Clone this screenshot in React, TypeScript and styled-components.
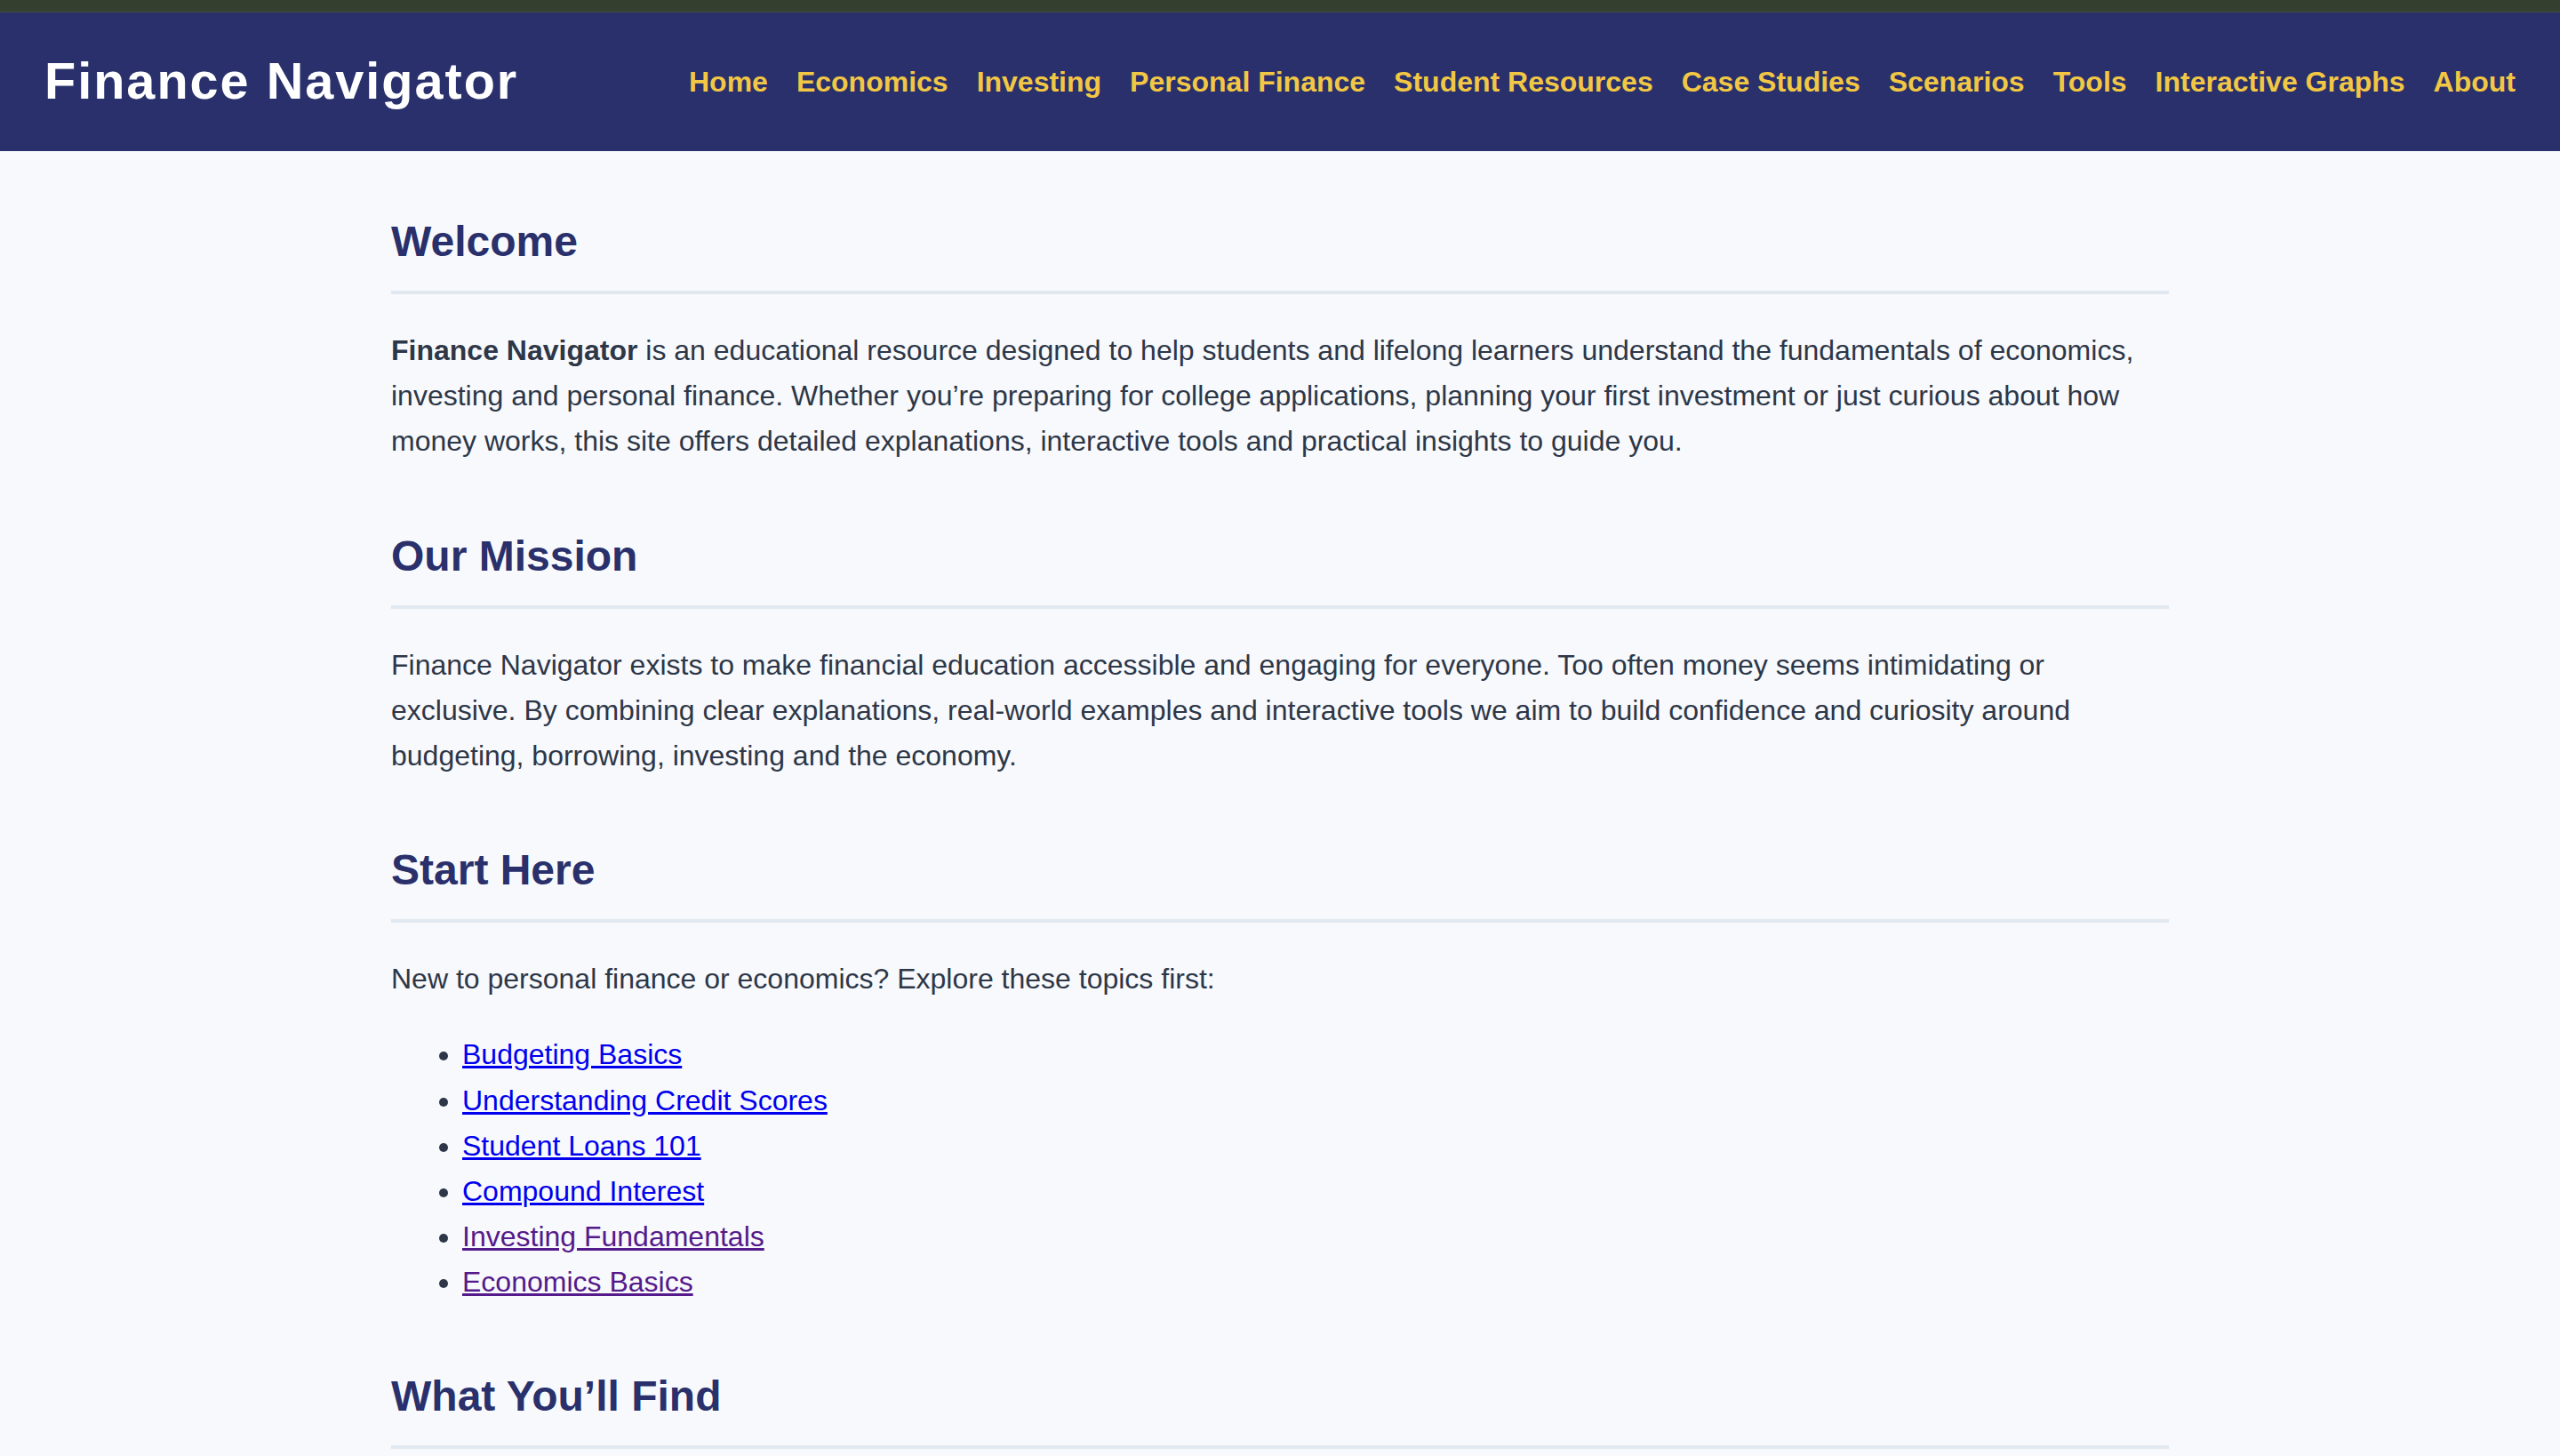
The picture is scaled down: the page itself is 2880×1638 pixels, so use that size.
import React from 'react';
import styled, { createGlobalStyle } from 'styled-components';

const GlobalStyle = createGlobalStyle`
  html, body {
    margin: 0;
    padding: 0;
    background: #f8f9fc;
  }
  body {
    font-family: "Liberation Sans", Arial, Helvetica, sans-serif;
    color: #2d3748;
    font-size: 32px;
    line-height: 1.6;
  }
`;

const TopStrip = styled.div`
  height: 13px;
  background: #353f2f;
  border-bottom: 1px solid #454c3c;
`;

const Header = styled.header`
  height: 156px;
  background: #29306b;
  display: flex;
  align-items: center;
  justify-content: space-between;
  padding: 0 50px;
  box-sizing: border-box;
`;

const Brand = styled.h1`
  margin: 0;
  color: #ffffff;
  font-size: 57.6px;
  font-weight: 700;
  letter-spacing: 2px;
  line-height: 1;
`;

const Nav = styled.nav`
  display: flex;
  align-items: center;
  gap: 32px;
`;

const NavLink = styled.a`
  color: #f2c744;
  font-size: 32px;
  font-weight: 700;
  text-decoration: none;
  line-height: 1;
  white-space: nowrap;
`;

const Main = styled.main`
  max-width: 2000px;
  margin: 0 auto;
  padding: 1px 0 80px;
`;

const Section = styled.section`
  &:first-child h2 {
    margin-top: 73px;
  }
`;

const Heading = styled.h2`
  margin: 75px 0 38px;
  padding-bottom: 28px;
  border-bottom: 4px solid #e2e8f0;
  color: #29306b;
  font-size: 48px;
  font-weight: 700;
  line-height: normal;
`;

const Para = styled.p`
  margin: 0 0 32px;
`;

const TopicList = styled.ul`
  margin: 34px 0 32px;
  padding-left: 80px;
`;

const Topic = styled.a<{ $visited?: boolean }>`
  color: ${(p) => (p.$visited ? '#551a8b' : '#0000ee')};
  text-decoration: underline;
`;

const navItems = [
  'Home',
  'Economics',
  'Investing',
  'Personal Finance',
  'Student Resources',
  'Case Studies',
  'Scenarios',
  'Tools',
  'Interactive Graphs',
  'About',
];

const topics = [
  { label: 'Budgeting Basics', visited: false },
  { label: 'Understanding Credit Scores', visited: false },
  { label: 'Student Loans 101', visited: false },
  { label: 'Compound Interest', visited: false },
  { label: 'Investing Fundamentals', visited: true },
  { label: 'Economics Basics', visited: true },
];

export default function App() {
  return (
    <>
      <GlobalStyle />
      <TopStrip />
      <Header>
        <Brand>Finance Navigator</Brand>
        <Nav>
          {navItems.map((item) => (
            <NavLink key={item} href="#">
              {item}
            </NavLink>
          ))}
        </Nav>
      </Header>
      <Main>
        <Section>
          <Heading>Welcome</Heading>
          <Para>
            <strong>Finance Navigator</strong> is an educational resource designed to help
            students and lifelong learners understand the fundamentals of economics, investing
            and personal finance. Whether you’re preparing for college applications, planning
            your first investment or just curious about how money works, this site offers
            detailed explanations, interactive tools and practical insights to guide you.
          </Para>
        </Section>
        <Section>
          <Heading>Our Mission</Heading>
          <Para>
            Finance Navigator exists to make financial education accessible and engaging for
            everyone. Too often money seems intimidating or exclusive. By combining clear
            explanations, real-world examples and interactive tools we aim to build confidence
            and curiosity around budgeting, borrowing, investing and the economy.
          </Para>
        </Section>
        <Section>
          <Heading>Start Here</Heading>
          <Para>New to personal finance or economics? Explore these topics first:</Para>
          <TopicList>
            {topics.map((t) => (
              <li key={t.label}>
                <Topic href="#" $visited={t.visited}>
                  {t.label}
                </Topic>
              </li>
            ))}
          </TopicList>
        </Section>
        <Section>
          <Heading>What You’ll Find</Heading>
          <Para>
            In-depth guides, case studies, realistic scenarios and calculators that help you
            put ideas into practice.
          </Para>
        </Section>
      </Main>
    </>
  );
}
